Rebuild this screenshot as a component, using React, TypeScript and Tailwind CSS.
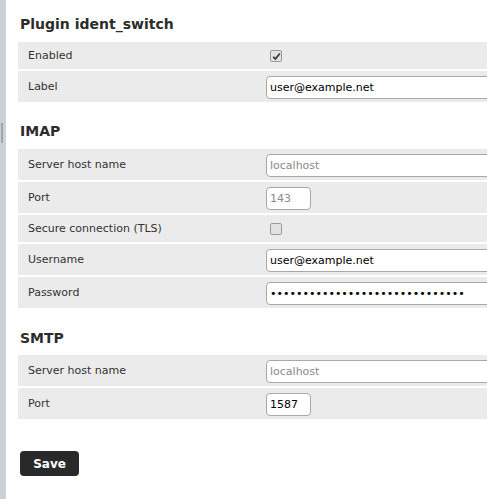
import React from 'react'

const font = { fontFamily: '"DejaVu Sans", Verdana, sans-serif' }

function Heading({ children, top, bottom }: { children: React.ReactNode; top: string; bottom: string }) {
  return (
    <h2 className={`${top} ${bottom} pl-[2px] h-[20px] leading-[20px] text-[14px] font-bold text-[#2c2c2c]`}>
      {children}
    </h2>
  )
}

function Row({ label, tall = true, children }: { label: string; tall?: boolean; children: React.ReactNode }) {
  return (
    <div className={`flex items-center bg-[#ebebeb] mb-[2px] ${tall ? 'h-[31px]' : 'h-[27px]'}`}>
      <div className="w-[240px] pl-[10px] pt-[2px] text-[11px] text-[#333]">{label}</div>
      <div className="flex items-center pl-[8px] pt-[1px]">{children}</div>
    </div>
  )
}

function TextInput({ value, placeholder, type = 'text', small = false }: { value?: string; placeholder?: string; type?: string; small?: boolean }) {
  return (
    <input
      type={type}
      defaultValue={value}
      placeholder={placeholder}
      className={`h-[23px] rounded-[4px] border border-[#a8a8a8] bg-white px-[3px] text-[11px] text-black placeholder-[#8a8a8a] outline-none ${small ? 'w-[45px]' : 'w-[270px]'}`}
      style={font}
    />
  )
}

function Check({ checked }: { checked: boolean }) {
  return (
    <span className="ml-[4px] flex h-[12px] w-[12px] items-center justify-center rounded-[2px] border border-[#9a9a9a] bg-[#e2e2e2]">
      {checked && (
        <svg width="9" height="9" viewBox="0 0 9 9">
          <path d="M1.2 4.8 L3.4 7 L7.8 1.5" fill="none" stroke="#3a3a3a" strokeWidth="1.8" />
        </svg>
      )}
    </span>
  )
}

export default function App() {
  return (
    <div className="flex h-[499px] w-[487px] overflow-hidden bg-white" style={font}>
      <div className="relative w-[6px] shrink-0 bg-[#c9d1d9]">
        <div className="absolute left-[1px] top-[123px] h-[20px] w-[2px] bg-[#9ea6ae]" />
      </div>
      <div className="w-[560px] shrink-0 pl-[12px]">
        <Heading top="mt-[14px]" bottom="mb-[8px]">Plugin ident_switch</Heading>
        <Row label="Enabled" tall={false}>
          <Check checked />
        </Row>
        <Row label="Label">
          <TextInput value="user@example.net" />
        </Row>

        <Heading top="mt-[19px]" bottom="mb-[8px]">IMAP</Heading>
        <Row label="Server host name">
          <TextInput placeholder="localhost" />
        </Row>
        <Row label="Port">
          <TextInput placeholder="143" small />
        </Row>
        <Row label="Secure connection (TLS)" tall={false}>
          <Check checked={false} />
        </Row>
        <Row label="Username">
          <TextInput value="user@example.net" />
        </Row>
        <Row label="Password">
          <TextInput type="password" value="passwordpasswordpasswordpasswo" />
        </Row>

        <Heading top="mt-[20px]" bottom="mb-[7px]">SMTP</Heading>
        <Row label="Server host name">
          <TextInput placeholder="localhost" />
        </Row>
        <Row label="Port">
          <TextInput value="1587" small />
        </Row>

        <button
          type="button"
          className="ml-[2px] mt-[30px] h-[25px] w-[59px] rounded-[4px] bg-[#29292c] pt-[1px] text-[12px] font-bold text-white"
        >
          Save
        </button>
      </div>
    </div>
  )
}
